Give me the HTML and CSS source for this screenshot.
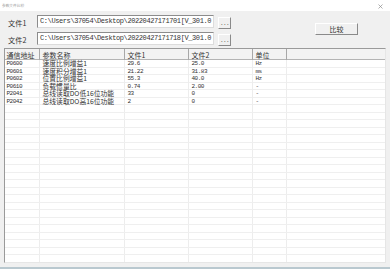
FILE: index.html
```html
<!DOCTYPE html>
<html lang="zh">
<head>
<meta charset="utf-8">
<title>参数文件比较</title>
<link rel="stylesheet" href="styles.css">
</head>
<body>

<div class="window">
  <div class="titlebar">
    <span class="title">参数文件比较</span>
    <svg class="close" width="5" height="5" viewBox="0 0 5 5"><path d="M0.5 0.5L4.5 4.5M4.5 0.5L0.5 4.5" stroke="#8c8c8c" stroke-width="0.7"/></svg>
  </div>

  <div class="content">
    <div class="top">
      <div class="files">
        <div class="file-row">
          <span class="label">文件1</span>
          <div class="path">C:\Users\37054\Desktop\20220427171701[V_301.0</div>
          <button type="button" class="browse">...</button>
        </div>
        <div class="file-row">
          <span class="label">文件2</span>
          <div class="path">C:\Users\37054\Desktop\20220427171718[V_301.0</div>
          <button type="button" class="browse">...</button>
        </div>
      </div>
      <button type="button" class="compare">比较</button>
    </div>

    <div class="grid">
      <div class="row head">
        <div class="cell">通信地址</div><div class="cell">参数名称</div><div class="cell">文件1</div><div class="cell">文件2</div><div class="cell">单位</div><div class="cell"></div>
      </div>
      <div class="row"><div class="cell mono">P0600</div><div class="cell">速度比例增益1</div><div class="cell mono">29.6</div><div class="cell mono">25.0</div><div class="cell mono">Hz</div><div class="cell"></div></div>
      <div class="row"><div class="cell mono">P0601</div><div class="cell">速度积分增益1</div><div class="cell mono">21.22</div><div class="cell mono">31.83</div><div class="cell mono">ms</div><div class="cell"></div></div>
      <div class="row"><div class="cell mono">P0602</div><div class="cell">位置比例增益1</div><div class="cell mono">55.3</div><div class="cell mono">40.0</div><div class="cell mono">Hz</div><div class="cell"></div></div>
      <div class="row"><div class="cell mono">P0610</div><div class="cell">负载惯量比</div><div class="cell mono">0.74</div><div class="cell mono">2.00</div><div class="cell mono">-</div><div class="cell"></div></div>
      <div class="row"><div class="cell mono">P2041</div><div class="cell">总线读取DO低16位功能</div><div class="cell mono">33</div><div class="cell mono">0</div><div class="cell mono">-</div><div class="cell"></div></div>
      <div class="row"><div class="cell mono">P2042</div><div class="cell">总线读取DO高16位功能</div><div class="cell mono">2</div><div class="cell mono">0</div><div class="cell mono">-</div><div class="cell"></div></div>
      <div class="row"><div class="cell"></div><div class="cell"></div><div class="cell"></div><div class="cell"></div><div class="cell"></div><div class="cell"></div></div>
      <div class="row"><div class="cell"></div><div class="cell"></div><div class="cell"></div><div class="cell"></div><div class="cell"></div><div class="cell"></div></div>
      <div class="row"><div class="cell"></div><div class="cell"></div><div class="cell"></div><div class="cell"></div><div class="cell"></div><div class="cell"></div></div>
      <div class="row"><div class="cell"></div><div class="cell"></div><div class="cell"></div><div class="cell"></div><div class="cell"></div><div class="cell"></div></div>
      <div class="row"><div class="cell"></div><div class="cell"></div><div class="cell"></div><div class="cell"></div><div class="cell"></div><div class="cell"></div></div>
      <div class="row"><div class="cell"></div><div class="cell"></div><div class="cell"></div><div class="cell"></div><div class="cell"></div><div class="cell"></div></div>
      <div class="row"><div class="cell"></div><div class="cell"></div><div class="cell"></div><div class="cell"></div><div class="cell"></div><div class="cell"></div></div>
      <div class="row"><div class="cell"></div><div class="cell"></div><div class="cell"></div><div class="cell"></div><div class="cell"></div><div class="cell"></div></div>
      <div class="row"><div class="cell"></div><div class="cell"></div><div class="cell"></div><div class="cell"></div><div class="cell"></div><div class="cell"></div></div>
      <div class="row"><div class="cell"></div><div class="cell"></div><div class="cell"></div><div class="cell"></div><div class="cell"></div><div class="cell"></div></div>
      <div class="row"><div class="cell"></div><div class="cell"></div><div class="cell"></div><div class="cell"></div><div class="cell"></div><div class="cell"></div></div>
      <div class="row"><div class="cell"></div><div class="cell"></div><div class="cell"></div><div class="cell"></div><div class="cell"></div><div class="cell"></div></div>
      <div class="row"><div class="cell"></div><div class="cell"></div><div class="cell"></div><div class="cell"></div><div class="cell"></div><div class="cell"></div></div>
      <div class="row"><div class="cell"></div><div class="cell"></div><div class="cell"></div><div class="cell"></div><div class="cell"></div><div class="cell"></div></div>
      <div class="row"><div class="cell"></div><div class="cell"></div><div class="cell"></div><div class="cell"></div><div class="cell"></div><div class="cell"></div></div>
      <div class="row"><div class="cell"></div><div class="cell"></div><div class="cell"></div><div class="cell"></div><div class="cell"></div><div class="cell"></div></div>
      <div class="row"><div class="cell"></div><div class="cell"></div><div class="cell"></div><div class="cell"></div><div class="cell"></div><div class="cell"></div></div>
      <div class="row"><div class="cell"></div><div class="cell"></div><div class="cell"></div><div class="cell"></div><div class="cell"></div><div class="cell"></div></div>
      <div class="row"><div class="cell"></div><div class="cell"></div><div class="cell"></div><div class="cell"></div><div class="cell"></div><div class="cell"></div></div>
      <div class="row"><div class="cell"></div><div class="cell"></div><div class="cell"></div><div class="cell"></div><div class="cell"></div><div class="cell"></div></div>
      <div class="row"><div class="cell"></div><div class="cell"></div><div class="cell"></div><div class="cell"></div><div class="cell"></div><div class="cell"></div></div>
    </div>
  </div>
</div>

</body>
</html>
```

FILE: styles.css
```css
body {
  margin: 0;
  font-family: "Noto Sans CJK SC", sans-serif;
  background-color: #b9c8cf;
}

.window {
  width: 390px;
  height: 269px;
  display: flex;
  flex-direction: column;
  box-sizing: border-box;
}

.titlebar {
  height: 11px;
  background-color: #ffffff;
  display: flex;
  align-items: center;
  justify-content: space-between;
  padding: 0 7px 0 2px;
}

.title {
  font-size: 3.7px;
  line-height: 5px;
  color: #9a9a9a;
}

.close {
  margin-top: 1px;
}

.content {
  flex: 1;
  display: flex;
  flex-direction: column;
  background-color: #f0f0f0;
  padding: 4px 4px 4px 4px;
  border-bottom: 2px solid #b9c8cf;
  min-height: 0;
}

.top {
  display: flex;
  align-items: flex-start;
}

.files {
  display: flex;
  flex-direction: column;
  gap: 4px;
}

.file-row {
  display: flex;
  height: 13px;
}

.label {
  width: 33px;
  padding-left: 4px;
  padding-top: 4px;
  box-sizing: border-box;
  font-size: 7.2px;
  line-height: 8px;
  color: #333333;
}

.path {
  width: 177px;
  height: 13px;
  box-sizing: border-box;
  border: 1px solid;
  border-color: #8c8c8c #dcdcdc #dcdcdc #8c8c8c;
  background-color: #ffffff;
  padding-left: 2px;
  font-family: "Liberation Mono", monospace;
  font-size: 7px;
  letter-spacing: -0.4px;
  line-height: 11px;
  color: #333333;
  white-space: nowrap;
  overflow: hidden;
}

.browse {
  width: 13px;
  height: 12px;
  margin: 2px 0 0 4px;
  padding: 0;
  border: 1px solid;
  border-color: #ffffff #8a8a8a #8a8a8a #ffffff;
  background-color: #f0f0f0;
  font-family: "Liberation Mono", monospace;
  font-size: 6px;
  line-height: 12px;
  letter-spacing: -0.6px;
  color: #444444;
}

.compare {
  width: 43px;
  height: 12px;
  margin: 8px 28px 0 auto;
  padding: 0;
  border: 1px solid;
  border-color: #ffffff #8a8a8a #8a8a8a #ffffff;
  background-color: #f0f0f0;
  font-family: "Noto Sans CJK SC", sans-serif;
  font-size: 7px;
  line-height: 10px;
  color: #333333;
}

.grid {
  flex: 1;
  margin-top: 3px;
  background-color: #ffffff;
  border: 1px solid;
  border-color: #9a9a9a #e6e6e6 #e6e6e6 #9a9a9a;
  overflow: hidden;
}

.row {
  display: grid;
  grid-template-columns: 35px 85px 64px 64px 34px 1fr;
  height: 7.5px;
  box-sizing: border-box;
  border-bottom: 1px solid #efefef;
}

.cell {
  border-right: 1px solid #ededed;
  padding-left: 2.5px;
  font-size: 6.8px;
  line-height: 7px;
  color: #333333;
  white-space: nowrap;
}

.cell:first-child {
  padding-left: 1.5px;
}

.cell:last-child {
  border-right: none;
}

.mono {
  font-family: "Liberation Mono", monospace;
  font-size: 6px;
  letter-spacing: -0.5px;
  line-height: 7.5px;
}

.head {
  height: 11px;
  background-color: #f3f3f3;
  border-bottom: 1px solid #b4b4b4;
}

.head .cell {
  font-size: 7px;
  line-height: 10px;
  padding-top: 1px;
  border-right: 1px solid #a8a8a8;
}

.head .cell:last-child {
  border-right: none;
}
```
